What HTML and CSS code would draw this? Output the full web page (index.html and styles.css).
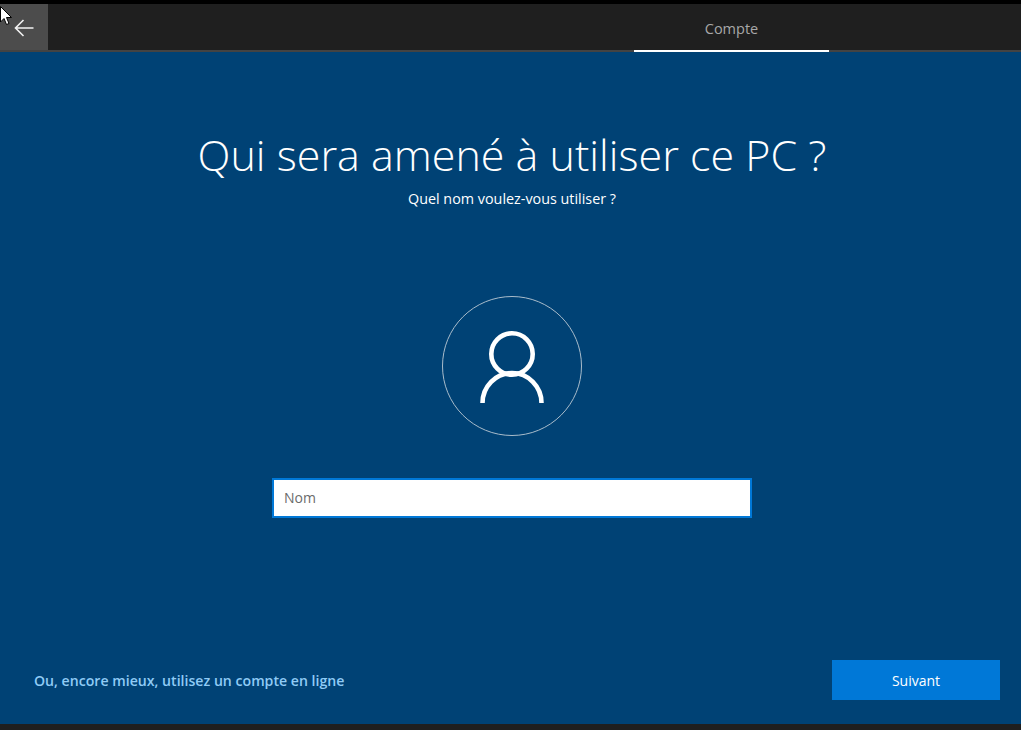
FILE: index.html
```html
<!DOCTYPE html>
<html lang="fr">
<head>
<meta charset="utf-8">
<title>Compte</title>
<link rel="stylesheet" href="styles.css">
</head>
<body>
<svg class="cursor" width="13" height="20" viewBox="0 0 13 20"><path d="M0.500 0.500V16L4 12.500L6.500 18.500L9 17.500L6.500 11.500H11.500Z" fill="#fff" stroke="#000"/></svg>
<header class="topbar">
  <button class="back" aria-label="Retour">
    <svg width="20" height="18" viewBox="0 0 20 18"><path d="M9.500 1L1.500 9L9.500 17M1.500 9H19.500" fill="none" stroke="#f2f2f2" stroke-width="1.600"/></svg>
  </button>
  <div class="tab">Compte</div>
</header>
<main class="page">
  <h1 class="title">Qui sera amené à utiliser ce PC ?</h1>
  <p class="subtitle">Quel nom voulez-vous utiliser ?</p>
  <div class="avatar">
    <svg class="person" width="66" height="72" viewBox="0 0 66 72"><circle cx="33" cy="23" r="20.700" fill="none" stroke="#fff" stroke-width="4.600"/><path d="M3.500 72A29.500 30 0 0 1 62.500 72" fill="none" stroke="#fff" stroke-width="4.600"/></svg>
  </div>
  <input class="name" type="text" placeholder="Nom">
  <div class="actions">
    <a class="online" href="#">Ou, encore mieux, utilisez un compte en ligne</a>
    <button class="next">Suivant</button>
  </div>
</main>
<div class="bottom"></div>
</body>
</html>
```

FILE: styles.css
```css
* { box-sizing: border-box; }
html, body { margin: 0; height: 100%; overflow: hidden; }
body {
  display: flex;
  flex-direction: column;
  height: 730px;
  background: #1f1f1f;
  border-top: 4px solid #000;
  font-family: "Open Sans", "Liberation Sans", sans-serif;
  color: #fff;
}
.cursor { position: absolute; left: 0; top: 6px; }
.topbar {
  display: flex;
  flex: none;
  height: 48px;
  background: #1f1f1f;
  border-bottom: 2px solid #434343;
}
.back {
  display: flex;
  align-items: center;
  justify-content: center;
  width: 48px;
  height: 46px;
  padding: 2px 0 0;
  border: 0;
  background: #4c4c4c;
}
.tab {
  width: 195px;
  height: 48px;
  margin-left: 586px;
  border-bottom: 2px solid #fff;
  font-size: 14.500px;
  line-height: 50px;
  text-align: center;
  color: #a8a8a8;
}
.page {
  flex: 1;
  display: flex;
  flex-direction: column;
  align-items: center;
  background: #004275;
  padding-top: 73px;
}
.title {
  margin: 0 0 0 3px;
  font-size: 43px;
  font-weight: 300;
  line-height: 60px;
  white-space: nowrap;
}
.subtitle {
  margin: 4px 0 0 3px;
  font-size: 14.350px;
  line-height: 20px;
}
.avatar {
  display: flex;
  align-items: center;
  justify-content: center;
  width: 140px;
  height: 140px;
  margin: 87px 0 0 3px;
  border: 1px solid #a9bccb;
  border-radius: 50%;
}
.person { margin-top: 2px; }
.name {
  width: 480px;
  height: 40px;
  margin: 42px 0 0 3px;
  padding: 0 10px 2px;
  border: 2px solid #0078d7;
  outline: 0;
  background: #fff;
  font: 14px "Open Sans", "Liberation Sans", sans-serif;
}
.name::placeholder { color: #6b6b6b; opacity: 1; }
.actions {
  display: flex;
  align-items: center;
  justify-content: space-between;
  align-self: stretch;
  margin-top: auto;
  padding: 0 21px 24px 34px;
}
.online {
  font-size: 14.140px;
  font-weight: 600;
  color: #8fcbf5;
  text-decoration: none;
}
.next {
  width: 168px;
  height: 40px;
  border: 0;
  background: #0078d7;
  color: #fff;
  font: 14px "Open Sans", "Liberation Sans", sans-serif;
}
.bottom { flex: none; height: 6px; background: #1f1f1f; }
```
